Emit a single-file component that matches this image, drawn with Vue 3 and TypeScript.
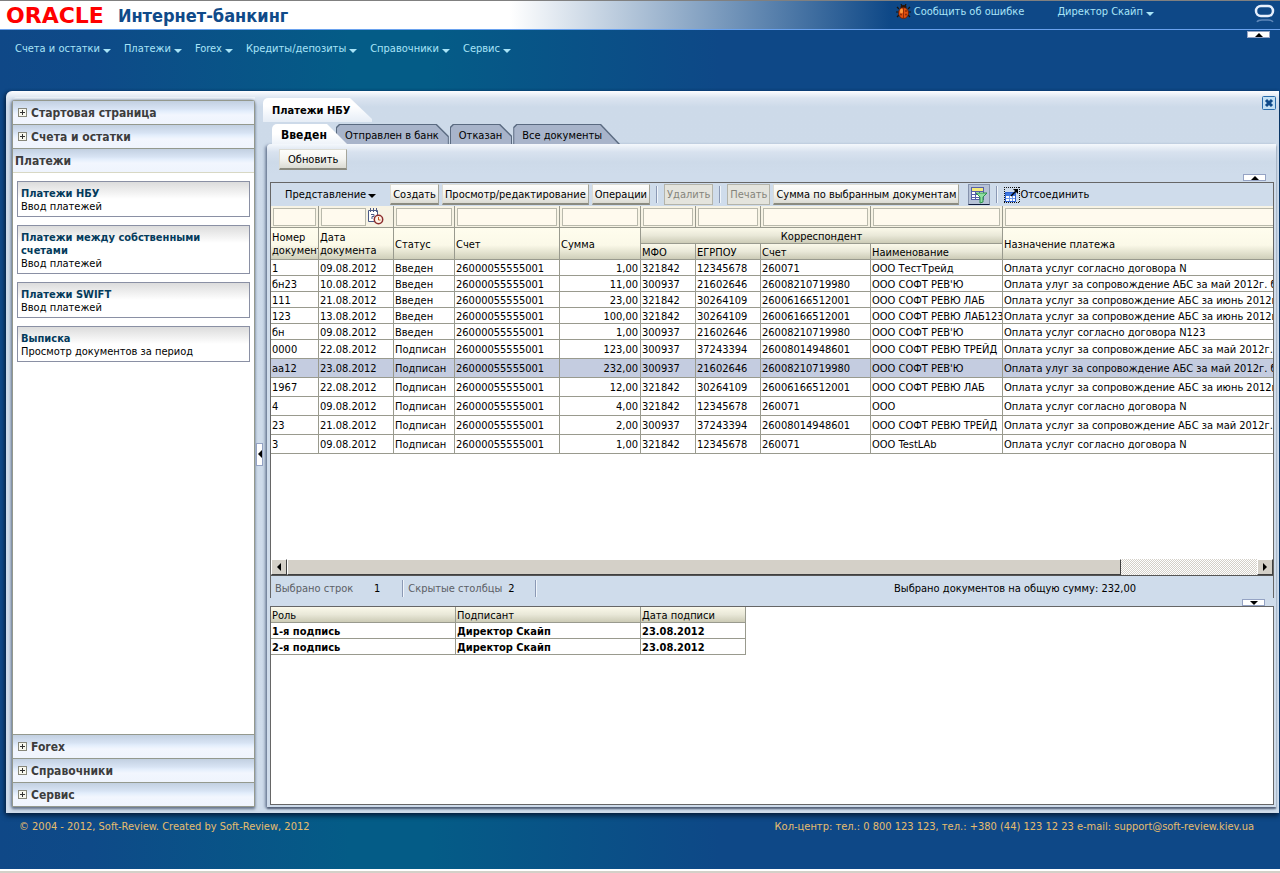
<script setup lang="ts">
import { ref } from 'vue'

interface Card {
  title: string
  note: string
}

interface Payment {
  num: string
  date: string
  status: string
  account: string
  sum: string
  mfo: string
  code: string
  corrAccount: string
  name: string
  purpose: string
}

const menu: string[] = ['Счета и остатки', 'Платежи', 'Forex', 'Кредиты/депозиты', 'Справочники', 'Сервис']
const topSections: string[] = ['Стартовая страница', 'Счета и остатки']
const bottomSections: string[] = ['Forex', 'Справочники', 'Сервис']

const cards: Card[] = [
  { title: 'Платежи НБУ', note: 'Ввод платежей' },
  { title: 'Платежи между собственными счетами', note: 'Ввод платежей' },
  { title: 'Платежи SWIFT', note: 'Ввод платежей' },
  { title: 'Выписка', note: 'Просмотр документов за период' },
]

const otherTabs: string[] = ['Отправлен в банк', 'Отказан', 'Все документы']

const make = (
  num: string, date: string, status: string, sum: string, mfo: string,
  code: string, corrAccount: string, name: string, purpose: string,
): Payment => ({ num, date, status, account: '26000055555001', sum, mfo, code, corrAccount, name, purpose })

const may = 'Оплата услуг за сопровождение АБС за май 2012г. без НДС'
const mayShort = 'Оплата улуг за сопровождение АБС за май 2012г. без НДС'
const june = 'Оплата услуг за сопровождение АБС за июнь 2012г. без НДС'

const payments: Payment[] = [
  make('1', '09.08.2012', 'Введен', '1,00', '321842', '12345678', '260071', 'ООО ТестТрейд', 'Оплата услуг согласно договора N'),
  make('бн23', '10.08.2012', 'Введен', '11,00', '300937', '21602646', '26008210719980', "ООО СОФТ РЕВ'Ю", mayShort),
  make('111', '21.08.2012', 'Введен', '23,00', '321842', '30264109', '26006166512001', 'ООО СОФТ РЕВЮ ЛАБ', june),
  make('123', '13.08.2012', 'Введен', '100,00', '321842', '30264109', '26006166512001', 'ООО СОФТ РЕВЮ ЛАБ123', june),
  make('бн', '09.08.2012', 'Введен', '1,00', '300937', '21602646', '26008210719980', "ООО СОФТ РЕВ'Ю", 'Оплата услуг согласно договора N123'),
  make('0000', '22.08.2012', 'Подписан', '123,00', '300937', '37243394', '26008014948601', 'ООО СОФТ РЕВЮ ТРЕЙД', may),
  make('аа12', '23.08.2012', 'Подписан', '232,00', '300937', '21602646', '26008210719980', "ООО СОФТ РЕВ'Ю", mayShort),
  make('1967', '22.08.2012', 'Подписан', '12,00', '321842', '30264109', '26006166512001', 'ООО СОФТ РЕВЮ ЛАБ', june),
  make('4', '09.08.2012', 'Подписан', '4,00', '321842', '12345678', '260071', 'ООО', 'Оплата услуг согласно договора N'),
  make('23', '21.08.2012', 'Подписан', '2,00', '300937', '37243394', '26008014948601', 'ООО СОФТ РЕВЮ ТРЕЙД', may),
  make('3', '09.08.2012', 'Подписан', '1,00', '321842', '12345678', '260071', 'ООО TestLAb', 'Оплата услуг согласно договора N'),
]

const filterLabels: string[] = [
  'Номер документа', 'Дата документа', 'Статус', 'Счет', 'Сумма',
  'МФО', 'ЕГРПОУ', 'Счет корреспондента', 'Наименование', 'Назначение платежа',
]

const signatures = [
  { role: '1-я подпись', person: 'Директор Скайп', date: '23.08.2012' },
  { role: '2-я подпись', person: 'Директор Скайп', date: '23.08.2012' },
]

const selected = ref<number>(6)
</script>

<template>
  <div class="page">
    <header class="brand-bar">
      <h1 class="brand">
        <span class="logo">ORACLE</span><span class="product">Интернет-банкинг</span>
      </h1>
      <div class="brand-links">
        <a href="#" class="bug-link">
          <svg width="15" height="15" viewBox="0 0 15 15" aria-hidden="true">
            <path d="M1 3l2 2M14 3l-2 2M0 8h3M15 8h-3M1 13l2-2M14 13l-2-2M5 0l1 2M10 0L9 2" stroke="#1b1208" stroke-width="1.2" />
            <ellipse cx="7.500" cy="3" rx="3" ry="2" fill="#2a1408" />
            <ellipse cx="7.500" cy="9" rx="5" ry="5.500" fill="#e2500f" stroke="#5a1c06" stroke-width="0.800" />
            <ellipse cx="5.500" cy="7" rx="1.500" ry="2.500" fill="#ff9a3c" />
            <path d="M7.500 4v10" stroke="#7a2205" stroke-width="0.800" />
            <circle cx="5" cy="10.500" r="1" fill="#8a2a05" />
            <circle cx="10" cy="10.500" r="1" fill="#8a2a05" />
            <circle cx="10" cy="7" r="1" fill="#8a2a05" />
          </svg>
          <span>Сообщить об ошибке</span>
        </a>
        <button type="button" class="menu-btn">Директор Скайп<i class="caret"></i></button>
      </div>
      <svg class="o-mark" width="22" height="20" viewBox="0 0 22 20" aria-hidden="true">
        <rect x="2" y="2" width="17" height="10" rx="5" fill="none" stroke="#e6effc" stroke-width="2.500" />
        <path d="M3 18q1-2 5-2h6q4 0 5 2" fill="none" stroke="#7fa3cf" stroke-width="1.500" opacity="0.7" />
      </svg>
    </header>

    <nav class="main-nav">
      <button v-for="item in menu" :key="item" type="button" class="menu-btn">{{ item }}<i class="caret"></i></button>
      <button type="button" class="fold fold-nav" aria-label="Свернуть меню"><i class="up"></i></button>
    </nav>

    <main class="workspace">
      <aside class="sidebar">
        <div class="accordion">
          <button v-for="s in topSections" :key="s" type="button" class="section">
            <i class="plus"></i>{{ s }}
          </button>
          <h2 class="section open">Платежи</h2>
          <div class="cards">
            <a v-for="c in cards" :key="c.title" href="#" class="card">
              <strong>{{ c.title }}</strong>
              <span>{{ c.note }}</span>
            </a>
          </div>
          <button v-for="s in bottomSections" :key="s" type="button" class="section">
            <i class="plus"></i>{{ s }}
          </button>
        </div>
      </aside>

      <div class="splitter">
        <button type="button" class="split-handle" aria-label="Свернуть панель"><i class="left"></i></button>
      </div>

      <section class="content">
        <div class="doc-tabs">
          <button type="button" class="doc-tab">Платежи НБУ</button>
          <button type="button" class="close" aria-label="Закрыть">
            <svg width="14" height="14" viewBox="0 0 14 14" aria-hidden="true">
              <rect x="0.500" y="0.500" width="13" height="13" rx="1" fill="#c4e0f4" stroke="#2a6cab" />
              <path d="M4 4l6 6M10 4l-6 6" stroke="#0f4a8a" stroke-width="3" />
            </svg>
          </button>
        </div>
        <div class="tabs" role="tablist">
          <button type="button" role="tab" aria-selected="true" class="tab active">Введен</button>
          <button v-for="t in otherTabs" :key="t" type="button" role="tab" aria-selected="false" class="tab">
            <span>{{ t }}</span>
          </button>
        </div>

        <div class="panel">
          <div class="refresh-row">
            <button type="button" class="btn refresh">Обновить</button>
          </div>

          <div class="grid-box">
            <button type="button" class="fold fold-grid" aria-label="Свернуть таблицу"><i class="up"></i></button>
            <div class="toolbar">
              <button type="button" class="view-btn">Представление<i class="caret dark"></i></button>
              <button type="button" class="btn">Создать</button>
              <button type="button" class="btn">Просмотр/редактирование</button>
              <button type="button" class="btn">Операции</button>
              <i class="sep"></i>
              <button type="button" class="btn" disabled>Удалить</button>
              <i class="sep"></i>
              <button type="button" class="btn" disabled>Печать</button>
              <button type="button" class="btn">Сумма по выбранным документам</button>
              <button type="button" class="icon-btn" aria-label="Фильтр">
                <svg width="18" height="18" viewBox="0 0 18 18" aria-hidden="true">
                  <rect x="1.500" y="1.500" width="12" height="12" fill="#fff" stroke="#5560a8" />
                  <rect x="2" y="2" width="11" height="3" fill="#f4ea7c" />
                  <path d="M2 5.500h11M2 8.500h11M2 11.500h11M5.500 5v8M9.500 5v8" stroke="#5560a8" />
                  <path d="M6 7h11l-4 4v5l-3 1v-6z" fill="#8fe0a0" stroke="#2c8f4c" />
                </svg>
              </button>
              <i class="sep"></i>
              <button type="button" class="detach">
                <svg width="16" height="16" viewBox="0 0 16 16" aria-hidden="true">
                  <path d="M0 0.500h16M0 15.500h16M0.500 0v16M15.500 0v16" stroke="#111" stroke-dasharray="1 1" />
                  <rect x="1.500" y="5.500" width="10" height="9" fill="#fff" stroke="#2f62d0" />
                  <rect x="2" y="6" width="9" height="3" fill="#3f78e0" />
                  <path d="M2 11.500h9M5.500 9v5M8.500 9v5" stroke="#6f9aec" />
                  <path d="M7 9l6-6" stroke="#000" stroke-width="1.500" />
                  <path d="M9 2h5v5z" fill="#000" />
                </svg>
                <span>Отсоединить</span>
              </button>
            </div>

            <div class="grid-view">
              <table class="grid">
                <colgroup>
                  <col class="c-num" /><col class="c-date" /><col class="c-status" /><col class="c-acc" />
                  <col class="c-sum" /><col class="c-mfo" /><col class="c-code" /><col class="c-corr" />
                  <col class="c-name" /><col />
                </colgroup>
                <thead>
                  <tr class="filters">
                    <td v-for="(f, i) in filterLabels" :key="f">
                      <div class="filter-cell">
                        <input type="text" :aria-label="f" :class="{ wide: i === 9 }" />
                        <button v-if="i === 1" type="button" class="cal" aria-label="Выбрать дату">
                          <svg width="17" height="17" viewBox="0 0 17 17" aria-hidden="true">
                            <path d="M1.500 2.500h9v11h-9z" fill="#fff" stroke="#4c5a86" />
                            <path d="M3.500 0v4M6.500 0v4M9.500 0v4" stroke="#4c5a86" />
                            <path d="M4 6.500h3v2h-2v2.500" fill="none" stroke="#4c5a86" />
                            <circle cx="11.500" cy="11.500" r="4.200" fill="#fff3e8" stroke="#8c2d2d" stroke-width="1.500" />
                            <path d="M11.500 9v3h2" fill="none" stroke="#c05a20" />
                          </svg>
                        </button>
                        <i v-if="i === 1" class="cal-gap"></i>
                      </div>
                    </td>
                  </tr>
                  <tr class="head">
                    <th rowspan="2">Номер документа</th>
                    <th rowspan="2">Дата документа</th>
                    <th rowspan="2">Статус</th>
                    <th rowspan="2">Счет</th>
                    <th rowspan="2">Сумма</th>
                    <th colspan="4" class="group">Корреспондент</th>
                    <th rowspan="2">Назначение платежа</th>
                  </tr>
                  <tr class="head sub">
                    <th>МФО</th>
                    <th>ЕГРПОУ</th>
                    <th>Счет</th>
                    <th>Наименование</th>
                  </tr>
                </thead>
                <tbody>
                  <tr
                    v-for="(p, i) in payments"
                    :key="i"
                    :class="{ tall: p.status === 'Подписан', picked: i === selected }"
                    @click="selected = i"
                  >
                    <td>{{ p.num }}</td>
                    <td>{{ p.date }}</td>
                    <td>{{ p.status }}</td>
                    <td>{{ p.account }}</td>
                    <td class="num">{{ p.sum }}</td>
                    <td>{{ p.mfo }}</td>
                    <td>{{ p.code }}</td>
                    <td>{{ p.corrAccount }}</td>
                    <td>{{ p.name }}</td>
                    <td>{{ p.purpose }}</td>
                  </tr>
                </tbody>
              </table>
            </div>

            <div class="scrollbar">
              <button type="button" class="arrow" aria-label="Прокрутить влево"><i class="left"></i></button>
              <div class="track"><div class="thumb"></div></div>
              <button type="button" class="arrow" aria-label="Прокрутить вправо"><i class="right"></i></button>
            </div>

            <div class="status">
              <span class="muted">Выбрано строк</span>
              <span class="count">1</span>
              <i class="sep"></i>
              <span class="muted">Скрытые столбцы</span>
              <span class="hidden-count">2</span>
              <i class="sep"></i>
              <span class="total">Выбрано документов на общую сумму: 232,00</span>
            </div>
          </div>

          <div class="sign-box">
            <button type="button" class="fold fold-sign" aria-label="Свернуть подписи"><i class="down"></i></button>
            <table class="signs">
              <thead>
                <tr class="head"><th>Роль</th><th>Подписант</th><th>Дата подписи</th></tr>
              </thead>
              <tbody>
                <tr v-for="s in signatures" :key="s.role">
                  <td>{{ s.role }}</td><td>{{ s.person }}</td><td>{{ s.date }}</td>
                </tr>
              </tbody>
            </table>
          </div>
        </div>
      </section>
    </main>

    <footer class="footer">
      <span>© 2004 - 2012, Soft-Review. Created by Soft-Review, 2012</span>
      <span>Кол-центр: тел.: 0 800 123 123, тел.: +380 (44) 123 12 23 e-mail: support@soft-review.kiev.ua</span>
    </footer>
    <div class="edge"></div>
  </div>
</template>

<style>
body {
  margin: 0;
}
</style>

<style scoped>
.page {
  display: flex;
  flex-direction: column;
  min-height: 100vh;
  overflow: hidden;
  background: linear-gradient(90deg, #0f4887 0, #0e4a88 90px, #045c87 350px, #045c87 430px, #0e4887 720px, #0e4887 100%);
  font-family: 'DejaVu Sans Condensed', 'DejaVu Sans', sans-serif;
  font-size: 11px;
  line-height: 13px;
  color: #000;
}

.page *,
.page *::before,
.page *::after {
  box-sizing: border-box;
}

button,
input {
  margin: 0;
  padding: 0;
  border: 0;
  background: none;
  font: inherit;
  color: inherit;
  white-space: nowrap;
}

a {
  color: inherit;
  text-decoration: none;
}

/* Brand bar */
.brand-bar {
  position: relative;
  display: flex;
  justify-content: space-between;
  height: 30px;
  border-top: 1px solid #808080;
  border-bottom: 1px solid #6aa2ee;
  background: linear-gradient(90deg, #fff 0, #fff 510px, #0e4887 890px, #0e4887 100%);
}

.brand {
  display: flex;
  align-items: center;
  gap: 14px;
  margin: 0;
  padding-left: 6px;
  font-weight: bold;
}

.logo {
  font-family: 'DejaVu Sans', sans-serif;
  font-size: 22px;
  color: #f00;
}

.product {
  font-size: 18px;
  color: #104a89;
}

.brand-links {
  display: flex;
  align-items: flex-start;
  gap: 33px;
  padding: 3px 126px 0 0;
  color: #a8e4f8;
}

.bug-link {
  display: flex;
  align-items: center;
  gap: 3px;
}

.menu-btn {
  display: flex;
  align-items: center;
  gap: 3px;
  color: #a8e4f8;
}

.brand-links .menu-btn {
  padding-top: 1px;
}

.o-mark {
  position: absolute;
  top: 3px;
  right: 4px;
}

.caret {
  margin-top: 4px;
  border: 4px solid transparent;
  border-top-color: #a8e4f8;
  border-bottom: 0;
}

.caret.dark {
  margin-top: 3px;
  border-top-color: #000;
}

/* Navigation */
.main-nav {
  position: relative;
  display: flex;
  align-items: flex-start;
  gap: 13px;
  height: 61px;
  padding: 12px 15px 0;
}

.fold {
  position: absolute;
  z-index: 2;
  display: flex;
  align-items: center;
  justify-content: center;
  width: 23px;
  height: 7px;
  border: 1px solid #95a3c4;
  background: #fff;
}

.fold-nav {
  top: 1px;
  right: 10px;
}

.fold-grid {
  top: -9px;
  right: 7px;
}

.fold-sign {
  top: -8px;
  right: 8px;
}

.up,
.down {
  border: 4px solid transparent;
  border-top: 0;
  border-bottom-color: #000;
}

.down {
  border-top: 4px solid #000;
  border-bottom: 0;
}

.left,
.right {
  border: 4px solid transparent;
  border-left: 0;
  border-right-color: #000;
}

.right {
  border-left: 4px solid #000;
  border-right: 0;
}

/* Workspace */
.workspace {
  display: flex;
  flex: 1;
  margin: 0 1px 0 6px;
  padding: 6px 3px 6px 6px;
  border-radius: 6px 0 0 0;
  background: linear-gradient(180deg, #fdfdff 0, #dbe4f0 7px, #cddae9 16px, #cfdceb 100%);
  box-shadow: 0 3px 5px #06203f, -2px 0 3px #0a3564;
}

.sidebar {
  display: flex;
  width: 243px;
  padding-top: 3px;
  border-radius: 5px 0 0 0;
  background: linear-gradient(180deg, #f2f6fb, #c7d4e4 6px, #c7d4e4);
}

.accordion {
  display: flex;
  flex: 1;
  flex-direction: column;
  border: 1px solid #94998e;
  border-bottom: 0;
  border-radius: 3px 3px 0 0;
  background: #fff;
  box-shadow: 0 2px 3px #65748a, -1px 0 3px #7d8ba1;
}

.section {
  display: flex;
  align-items: center;
  gap: 4px;
  height: 24px;
  margin: 0;
  padding: 2px 0 0 5px;
  border-bottom: 1px solid #94998e;
  background: linear-gradient(180deg, #c2d0e1 0, #d8e4f4 8px, #e2edfb 10px, #f2f6fe 14px, #eff4fd 100%);
  font-size: 12px;
  font-weight: bold;
  color: #3d3d3d;
}

.section.open {
  padding-left: 2px;
  border-color: #d8d8c4;
}

.plus {
  width: 9px;
  height: 9px;
  margin-bottom: 3px;
  border: 1px solid #87877a;
  background:
    linear-gradient(#333, #333) center / 5px 1px no-repeat,
    linear-gradient(#333, #333) center / 1px 5px no-repeat,
    #f8f8ee;
}

.cards {
  display: flex;
  flex: 1;
  flex-direction: column;
  gap: 8px;
  padding: 8px 4px;
  border-bottom: 1px solid #94998e;
}

.card {
  display: flex;
  flex-direction: column;
  padding: 5px 4px 3px 3px;
  border: 1px solid #8a90a4;
  background: linear-gradient(180deg, #dcdcdc 0, #fff 17px);
}

.card strong {
  color: #043b5c;
}

/* Splitter */
.splitter {
  display: flex;
  align-items: center;
  width: 8px;
}

.split-handle {
  display: flex;
  align-items: center;
  justify-content: center;
  width: 7px;
  height: 23px;
  margin: 4px 0 0 1px;
  border: 1px solid #95a3c4;
  background: #fff;
}

/* Document tabs */
.content {
  display: flex;
  flex: 1;
  flex-direction: column;
  min-width: 0;
}

.doc-tabs {
  display: flex;
  justify-content: space-between;
  align-items: flex-start;
  margin: 1px 0 2px;
}

.doc-tab {
  width: 109px;
  height: 24px;
  padding-left: 9px;
  border-radius: 5px 0 0 0;
  background: linear-gradient(180deg, #fff 0, #fff 8px, #e6edf6 100%);
  clip-path: polygon(0 0, 87px 0, 100% 21px, 100% 100%, 0 100%);
  font-weight: bold;
  text-align: left;
}

.close {
  display: flex;
  margin-top: -2px;
}

.tabs {
  display: flex;
  height: 20px;
  padding-left: 9px;
}

.tab {
  margin-right: 1px;
  padding: 1px;
  background: #5a6a80;
  clip-path: polygon(0 3px, 3px 0, calc(100% - 12px) 0, 100% 12px, 100% 100%, 0 100%);
}

.tab span {
  display: flex;
  align-items: center;
  height: 20px;
  padding: 1px 9px 0 8px;
  background: #a8b4ca;
  clip-path: polygon(0 3px, 3px 0, calc(100% - 12px) 0, 100% 12px, 100% 100%, 0 100%);
}

.tab:last-child,
.tab:last-child span {
  clip-path: polygon(0 3px, 3px 0, calc(100% - 19px) 0, 100% 100%, 0 100%);
}

.tab:last-child span {
  padding-right: 17px;
}

.tab.active {
  z-index: 1;
  width: 75px;
  margin-right: -11px;
  padding: 2px 0 0 9px;
  border-radius: 5px 0 0 0;
  background: linear-gradient(180deg, #fff 0, #fff 10px, #eef3f9 100%);
  clip-path: polygon(0 0, 55px 0, 100% 100%, 0 100%);
  font-size: 12px;
  font-weight: bold;
  text-align: left;
}

.panel {
  display: flex;
  flex: 1;
  flex-direction: column;
  margin-left: 4px;
  padding: 5px 2px 2px 3px;
  border-radius: 4px 0 0 0;
  background: linear-gradient(180deg, #f4f8fc 0, #d8e2ef 8px, #cddae9 18px, #cfdceb 30px);
  box-shadow: 0 2px 2px #56637a, -2px 1px 3px #7b8ba5;
}

/* Buttons */
.btn {
  height: 21px;
  padding: 0 2px;
  border: 1px solid #dcdcd4;
  border-right-color: #a5a59a;
  border-bottom: 2px solid #8b8b80;
  background: linear-gradient(180deg, #fdfdfb 0, #f4f4f0 50%, #dbdbd3 100%);
}

.btn:disabled {
  border: 1px solid #b4b4aa;
  background: #e4e4dd;
  color: #84847c;
}

.refresh-row {
  display: flex;
  height: 33px;
  padding-left: 9px;
}

.refresh {
  padding: 0 8px;
}

/* Grid */
.grid-box {
  position: relative;
  display: flex;
  flex: 418 0 0;
  flex-direction: column;
  border: 1px solid #666;
  border-bottom: 0;
}

.toolbar {
  display: flex;
  align-items: center;
  gap: 3px;
  height: 23px;
}

.view-btn {
  display: flex;
  align-items: center;
  gap: 2px;
  padding: 0 11px 0 14px;
}

.sep {
  width: 2px;
  height: 17px;
  margin: 0 3px;
  border-left: 1px solid #8b99b4;
  border-right: 1px solid #f0f5fb;
}

.icon-btn {
  display: flex;
  align-items: center;
  justify-content: center;
  width: 22px;
  height: 21px;
  margin-left: 6px;
  border: 1px solid #8592ac;
  border-bottom-color: #111c3c;
  background: #b6c2d6;
}

.detach {
  display: flex;
  align-items: center;
}

.grid-view {
  flex: 1;
  overflow: hidden;
  background: #fff;
}

table {
  border-spacing: 0;
  table-layout: fixed;
}

.grid {
  width: 100%;
}

.c-num { width: 48px; }
.c-date { width: 75px; }
.c-status { width: 61px; }
.c-acc { width: 105px; }
.c-sum { width: 81px; }
.c-mfo { width: 55px; }
.c-code { width: 65px; }
.c-corr { width: 110px; }
.c-name { width: 132px; }

td,
th {
  height: 16px;
  padding: 1px 1px 0;
  overflow: hidden;
  border-right: 1px solid #999a8e;
  border-bottom: 1px solid #999a8e;
  text-align: left;
  white-space: nowrap;
}

.grid td:last-child,
.grid tr:nth-child(2) th:last-child {
  border-right: 0;
}

.filters td {
  height: 22px;
  padding: 0 2px;
  background: #f7f3e4;
}

.filter-cell {
  display: flex;
  align-items: center;
  gap: 1px;
}

.filter-cell input {
  flex: 1;
  width: 0;
  min-width: 0;
  height: 18px;
  border: 1px solid #b9b9ac;
  background: #fffaee;
}

.filter-cell input.wide {
  flex: none;
  width: 110%;
}

.cal {
  display: flex;
}

.cal-gap {
  width: 6px;
}

.head th {
  background: linear-gradient(180deg, #fffdee 0, #fbf9e8 55%, #cfcfba 100%);
  font-weight: normal;
  white-space: normal;
}

.head th.group,
.head.sub th,
.signs th {
  background: linear-gradient(180deg, #fbf9ea 0, #e9e8d8 50%, #cccbb6 100%);
}

.head th.group {
  text-align: center;
}

.grid .num {
  padding-right: 2px;
  text-align: right;
}

.tall td {
  height: 19px;
}

.picked td {
  background: #c4cce0;
}

/* Scroll bar */
.scrollbar {
  display: flex;
  height: 17px;
  border-bottom: 1px solid #555;
}

.arrow {
  display: flex;
  align-items: center;
  justify-content: center;
  width: 16px;
  border: 1px solid #fff;
  border-right-color: #404040;
  border-bottom-color: #404040;
  background: #d4d0c8;
}

.track {
  flex: 1;
  background: repeating-conic-gradient(#d4d0c8 0 25%, #fff 0 50%) 0 0 / 2px 2px;
}

.thumb {
  width: 86%;
  height: 16px;
  border: 1px solid #fff;
  border-right-color: #404040;
  border-bottom-color: #404040;
  background: #d4d0c8;
}

/* Status line */
.status {
  display: flex;
  align-items: center;
  height: 22px;
  padding: 2px 0 0 4px;
}

.muted {
  color: #5c6066;
}

.count {
  width: 48px;
  text-align: center;
}

.status .sep {
  margin: 0 4px 0 1px;
}

.hidden-count {
  padding: 0 19px 0 6px;
}

.total {
  margin: 0 137px 0 auto;
}

/* Signatures */
.sign-box {
  position: relative;
  flex: 198 0 0;
  margin-top: 8px;
  border: 1px solid #666;
  background: #fff;
}

.signs {
  width: 475px;
}

.signs th:nth-child(-n + 2) {
  width: 185px;
}

.signs td {
  font-weight: bold;
}

/* Footer */
.footer {
  display: flex;
  justify-content: space-between;
  height: 56px;
  padding: 7px 26px 0 19px;
  color: #e6bd6e;
}

.edge {
  height: 4px;
  border-top: 2px solid #fff;
  background: #d4d0c8;
}
</style>
